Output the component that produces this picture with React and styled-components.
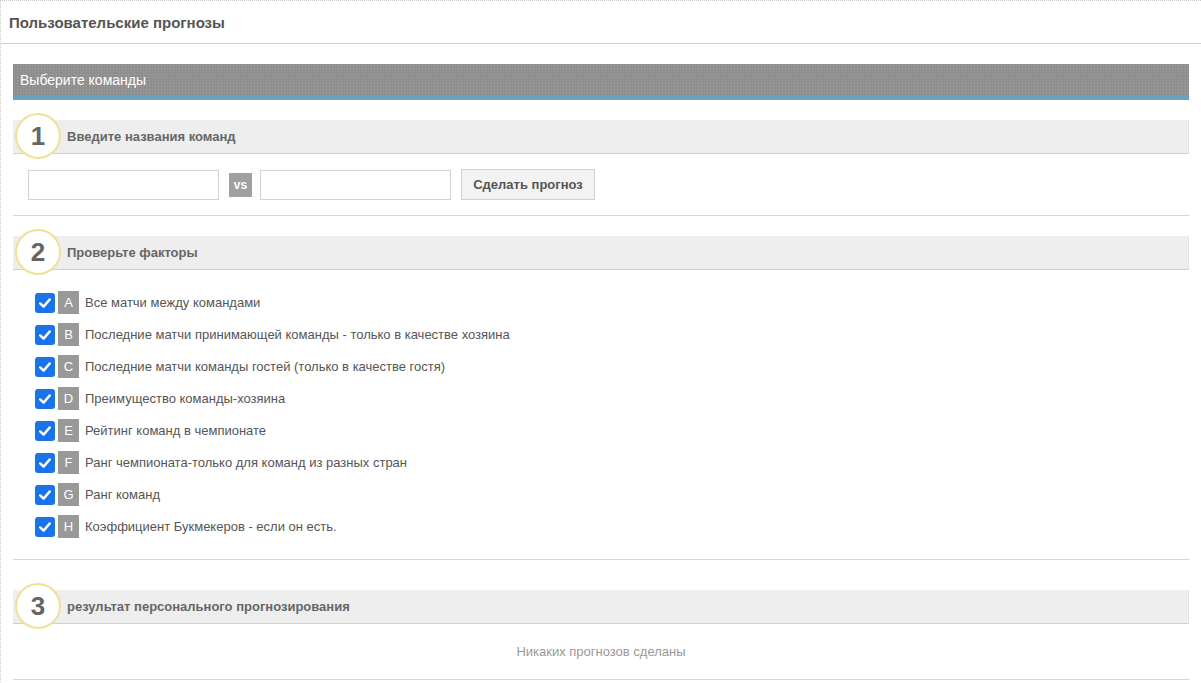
import styled, { createGlobalStyle } from "styled-components";

const GlobalStyle = createGlobalStyle`
  body {
    margin: 0;
    background: #fff;
    font-family: "Liberation Sans", Arial, sans-serif;
  }
`;

const factors = [
  ["A", "Все матчи между командами"],
  ["B", "Последние матчи принимающей команды - только в качестве хозяина"],
  ["C", "Последние матчи команды гостей (только в качестве гостя)"],
  ["D", "Преимущество команды-хозяина"],
  ["E", "Рейтинг команд в чемпионате"],
  ["F", "Ранг чемпионата-только для команд из разных стран"],
  ["G", "Ранг команд"],
  ["H", "Коэффициент Букмекеров - если он есть."],
];

const App = () => {
  return (
    <>
      <GlobalStyle />
      <Panel>
        <PanelHeader>Пользовательские прогнозы</PanelHeader>
        <Body>
          <Banner>Выберите команды</Banner>

          <Step>
            <StepHeader>
              <StepNum>1</StepNum>
              Введите названия команд
            </StepHeader>
            <TeamsRow>
              <TeamInput type="text" />
              <Vs>vs</Vs>
              <TeamInput type="text" />
              <PredictButton type="button">Сделать прогноз</PredictButton>
            </TeamsRow>
          </Step>

          <Step>
            <StepHeader>
              <StepNum>2</StepNum>
              Проверьте факторы
            </StepHeader>
            <FactorList>
              {factors.map(([letter, label]) => (
                <Factor key={letter}>
                  <Check>
                    <svg width="14" height="14" viewBox="0 0 14 14">
                      <path
                        d="M2.2 7.4 L5.6 10.6 L11.8 3.4"
                        fill="none"
                        stroke="#fff"
                        strokeWidth="2.4"
                        strokeLinecap="round"
                        strokeLinejoin="round"
                      />
                    </svg>
                  </Check>
                  <Letter>{letter}</Letter>
                  <span>{label}</span>
                </Factor>
              ))}
            </FactorList>
          </Step>

          <Step $top={30}>
            <StepHeader>
              <StepNum>3</StepNum>
              результат персонального прогнозирования
            </StepHeader>
            <Empty>Никаких прогнозов сделаны</Empty>
          </Step>
        </Body>
      </Panel>
    </>
  );
};

const Panel = styled.div`
  border-top: 1px dotted #c8c8c8;
  border-left: 1px dotted #c8c8c8;
  min-height: 682px;
  box-sizing: border-box;
`;

const PanelHeader = styled.div`
  height: 42px;
  display: flex;
  align-items: center;
  padding-left: 8px;
  font-size: 15px;
  font-weight: bold;
  color: #555;
  border-bottom: 1px solid #cfcfcf;
`;

const Body = styled.div`
  padding: 20px 12px 0 12px;
`;

const Banner = styled.div`
  height: 32px;
  display: flex;
  align-items: center;
  padding-left: 7px;
  font-size: 14px;
  color: #fff;
  background-color: #8f8f8f;
  background-image: radial-gradient(#a2a2a2 0.7px, transparent 0.8px);
  background-size: 3px 3px;
  border-bottom: 4px solid #6a9fc2;
`;

const Step = styled.section`
  margin-top: ${(p) => p.$top ?? 20}px;
  border-bottom: 1px solid #d6d6d6;
`;

const StepHeader = styled.div`
  position: relative;
  height: 33px;
  display: flex;
  align-items: center;
  padding-left: 54px;
  background: #eeeeee;
  border-bottom: 1px solid #d0d0d0;
  border-right: 1px solid #e2e2e2;
  font-size: 13px;
  font-weight: bold;
  color: #666;
`;

const StepNum = styled.span`
  position: absolute;
  left: 2px;
  top: -7px;
  width: 42px;
  height: 42px;
  border-radius: 50%;
  border: 2px solid #f0df96;
  background: #fff;
  display: flex;
  align-items: center;
  justify-content: center;
  font-family: Arial, "Liberation Sans", sans-serif;
  font-size: 26px;
  font-weight: bold;
  color: #666;
`;

const TeamsRow = styled.div`
  display: flex;
  align-items: center;
  gap: 10px;
  padding: 15px 15px 15px;
`;

const TeamInput = styled.input`
  width: 191px;
  height: 30px;
  box-sizing: border-box;
  border: 1px solid #d2d2d2;
  background: #fff;
  margin: 0;
  padding: 0 6px;
`;

const Vs = styled.span`
  width: 23px;
  height: 24px;
  display: flex;
  align-items: center;
  justify-content: center;
  background: #a0a0a0;
  color: #fff;
  font-size: 12px;
  font-weight: bold;
  margin-right: -2px;
`;

const PredictButton = styled.button`
  height: 31px;
  width: 134px;
  margin: 0;
  border: 1px solid #d0d0d0;
  background: #f3f3f3;
  color: #555;
  font-family: "Liberation Sans", Arial, sans-serif;
  font-size: 13px;
  font-weight: bold;
  cursor: pointer;
`;

const FactorList = styled.ul`
  list-style: none;
  margin: 0;
  padding: 21px 0 21px 22px;
  display: flex;
  flex-direction: column;
  gap: 9px;
`;

const Factor = styled.li`
  display: flex;
  align-items: center;
  height: 23px;
  font-size: 13px;
  color: #555;
`;

const Check = styled.span`
  width: 20px;
  height: 20px;
  border-radius: 3px;
  background: #1a73e8;
  display: flex;
  align-items: center;
  justify-content: center;
  margin-right: 3px;
`;

const Letter = styled.span`
  width: 21px;
  height: 23px;
  background: #999;
  color: #fff;
  display: flex;
  align-items: center;
  justify-content: center;
  font-size: 13px;
  margin-right: 6px;
`;

const Empty = styled.div`
  height: 55px;
  display: flex;
  align-items: center;
  justify-content: center;
  font-size: 13px;
  color: #999;
`;

export default App;
